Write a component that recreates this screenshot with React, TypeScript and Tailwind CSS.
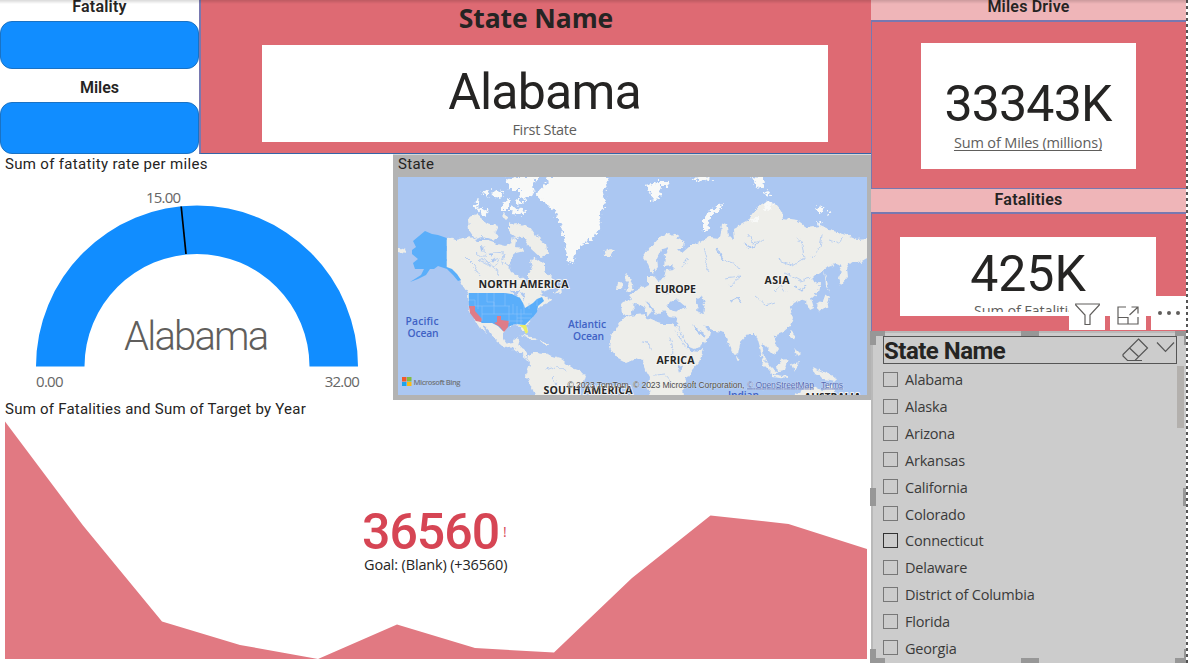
import React from "react";

const DIN = "font-['Roboto',sans-serif]";
const UI = "font-['Open_Sans',sans-serif]";

const states = [
  "Alabama", "Alaska", "Arizona", "Arkansas", "California", "Colorado",
  "Connecticut", "Delaware", "District of Columbia", "Florida", "Georgia",
];

function WorldMap() {
  return (
    <svg className="block h-[218px] w-[469px]" viewBox="398 177 469 218">
      <defs>
        <filter id="coast" x="-5%" y="-5%" width="110%" height="110%">
          <feTurbulence type="fractalNoise" baseFrequency="0.16" numOctaves="3" seed="4" result="n" />
          <feDisplacementMap in="SourceGraphic" in2="n" scale="6" xChannelSelector="R" yChannelSelector="G" />
        </filter>
        <filter id="ice" x="-5%" y="-5%" width="110%" height="110%">
          <feTurbulence type="fractalNoise" baseFrequency="0.3" numOctaves="2" seed="9" result="n" />
          <feDisplacementMap in="SourceGraphic" in2="n" scale="9" xChannelSelector="R" yChannelSelector="G" />
        </filter>
      </defs>
      <rect x="398" y="177" width="469" height="218" fill="#abc7f2" />
      <g filter="url(#coast)" fill="#eeeeea">
        {/* North and Central America */}
        <path d="M446 237L455 240 463 238 470 236 478 241 488 241 497 244 505 246 511 244 513 236 517 239 516 247 522 248 524 252 516 254 510 259 509 266 512 272 519 276 524 280 526 286 529 281 529 274 532 268 530 260 534 258 541 263 545 262 545 270 551 277 557 284 550 289 543 292 540 295 547 297 552 300 545 304 538 307 533 317 527 324 528 332 525 333 521 326 515 325 508 327 503 332 503 339 507 344 513 343 516 338 520 339 518 346 524 349 528 355 526 358 519 352 510 348 501 345 495 340 491 333 482 323 486 333 482 330 475 319 469 309 468 294 461 283 456 274 446 267Z" />
        {/* South America */}
        <path d="M527 358L533 352 538 352 543 353 553 356 560 358 565 362 571 368 580 371 586 375 584 382 579 387 577 397 536 397 531 386 526 375 530 365Z" />
        {/* Africa */}
        <path d="M622 319L630 315 645 313 648 319 655 322 662 324 670 324 677 326 681 334 686 343 690 350 699 351 704 350 699 362 692 370 686 379 683 389 684 397 651 397 648 387 649 377 645 370 643 361 635 359 626 363 618 359 612 352 609 346 611 337 616 328Z" />
        {/* Europe and Asia */}
        <path d="M643 257L650 247 660 236 670 233 677 237 685 242 684 248 677 248 682 253 690 246 702 242 710 237 720 238 722 225 727 222 729 235 734 240 733 229 748 221 758 207 768 201 776 204 782 211 783 219 797 221 807 228 820 226 830 230 847 235 857 239 869 238 869 258 860 263 851 261 847 268 848 277 841 285 838 277 843 266 837 264 827 268 817 274 812 279 820 284 818 292 811 298 814 308 810 310 806 302 800 300 794 303 790 308 793 318 790 326 783 332 775 335 774 341 778 349 774 355 767 348 762 343 764 356 768 362 763 359 758 341 755 333 749 333 740 343 738 354 734 356 729 344 725 333 713 330 702 326 710 333 708 341 695 349 690 347 684 338 677 325 678 318 669 317 664 311 656 314 651 306 644 300 652 311 649 315 642 305 635 304 631 314 622 316 621 305 624 302 631 300 628 296 636 291 643 287 648 284 648 276 654 276 658 281 665 279 667 270 675 269 671 265 663 266 664 255 669 247 662 249 657 260 658 267 652 274 647 263Z" />
        <path d="M626 274L630 277 634 289 626 291 629 284 625 280Z M618 283L623 282 622 289 617 289Z M603 252L609 248 615 251 610 256 604 256Z" />
        <path d="M817 305L823 301 826 293 830 297 827 307 819 312Z M824 270L828 284 830 293 826 284Z" />
        <path d="M759 355L766 362 773 369 779 373 772 373 763 364Z M777 366L784 358 788 361 785 370 778 371Z M772 374L788 377 788 379 772 377Z M813 367L821 371 833 376 836 381 824 379 815 374Z M790 330L796 336 795 341 790 337Z M794 347L801 354 797 357Z M792 364L799 361 795 371Z M791 397L803 390 813 386 822 391 831 384 837 397Z M736 356L740 357 738 361Z" />
        <path d="M519 334L531 337 538 341 529 339Z M540 341L549 343 545 345Z M397 247L406 250 404 254 397 252Z M553 293L560 289 561 294Z" />
        {/* Canadian archipelago */}
        <path d="M468 219L477 215 486 222 493 231 499 236 494 241 482 237 475 239 469 230Z M484 222L498 226 495 232 487 229Z M508 225L520 224 531 228 538 238 546 245 548 254 541 257 531 248 524 238 515 237 508 232Z M510 222L516 226 510 232Z M502 212L510 216 505 221Z" />
      </g>
      <g filter="url(#ice)" fill="#f8f9f8">
        <path d="M536 193L546 184 549 176 610 176 606 187 603 193 606 201 599 217 601 228 593 238 583 245 576 252 573 263 568 262 565 243 559 222 554 210 545 203 541 200Z" />
        <path d="M506 179L518 176 540 176 532 185 534 193 526 200 519 197 522 190 510 190Z M472 205L479 200 477 208 490 211 484 216Z M492 190L503 192 501 198 493 197Z M502 203L509 199 509 210 502 210Z M512 207L526 210 525 215 511 214Z M482 193L489 190 487 197Z M516 199L526 203 517 205Z" />
        <path d="M647 185L656 183 661 188 658 200 651 199Z M656 181L667 181 668 186 657 186Z M703 230L703 219 711 209 723 203 721 209 710 217 707 231Z M752 176L763 177 764 187 756 188Z M763 190L770 192 768 198Z M767 200L773 202 771 211 763 210Z M813 208L824 206 820 214Z M818 220L823 222 819 225Z M827 210L831 212 829 215Z M748 222L760 215 757 221Z M690 178L711 176 712 179 699 181Z" />
      </g>
      {/* Inland water */}
      <g filter="url(#coast)" fill="#abc7f2">
        <path d="M666 306L672 300 680 301 687 307 681 311 672 310Z M695 300L702 296 705 304 703 314 697 311 698 305Z M692 324L699 331 706 335 704 338 695 330Z M674 329L686 347 689 351 680 340Z M678 364L683 366 680 372Z M511 291L519 291 517 296Z M519 294L525 293 524 300Z M518 297L521 304 517 303Z M480 246L484 247 481 251Z M491 258L495 259 493 263Z M489 253L493 252 491 256Z" />
        <g fill="none" stroke="#abc7f2" strokeWidth="0.8">
          <path d="M704 248L707 258 705 265 710 273M719 250L722 259 735 264 740 270M749 234L753 243 765 239M778 260L793 265 804 258 802 245 797 237M822 234L820 247 812 258M829 240L840 243 842 237M785 273L800 281 811 278M725 278L740 276 730 287M659 289L668 294 674 286M773 292L781 285 786 292M755 296L766 305 775 302M480 246L488 253 480 260 495 268 499 276M494 252L505 253 503 262 510 267M474 251L487 263 500 259 494 268M640 341L650 345 653 352M670 337L673 350 667 362M655 375L665 374 672 382M546 370L557 366 567 371M551 377L557 384M465 257L474 266 480 276" />
          <path d="M717 249L724 260M744 243L751 248 758 243M682 267L688 258M730 301L738 297 742 302M795 286L802 290 806 284" strokeWidth="1.1" />
        </g>
      </g>
      {/* Highlighted states */}
      <g fill="#5aaefa">
        <path d="M412 250L416 247 413 241 419 236 425 231 432 234 438 235 446.700 238V267L452 269 457 274 461 280 458 281 453 275 447 269 438 266 434 269 430 269 426 275 418 279 410 282 421 275 424 269 415 269 413 263 418 259 412 254Z" />
        <path d="M468.700 293H505L512 294 520 298 523 303 525 308 533 303 537 299 542 297 544 301 538 306 537 312 533 317 528 322 525 325 515 324 508 327 503 331 498 326 492 323 482 323 475 318 469 307Z" />
      </g>
      <path d="M469 306H475V311L482 319 481 322 476 321 470 313Z M497 316H501V320L509 321 508 327 504 332 500 327 494 323 497 322Z" fill="#df7c88" />
      <path d="M519 325L526 325 528 332 526 334 523 328Z" fill="#e9ed66" />
      <g fill="none" stroke="#94c6f8" strokeWidth="0.5">
        <path d="M475 306V300H469M478 293V309M475 306H494M482 306V321M482 314H509M487 293V302H494V314M494 293V306H510M505 293V306M509 306V323M517 306V324M513 304V314M521 309V324M509 314H532M517 318H531M524 305V314M529 303V309M537 299V306M509 321H523" />
      </g>
      <g className="font-['Open_Sans',sans-serif] font-bold" fontSize="10.600" fill="#262626" stroke="#f4f4f2" strokeWidth="1.800" paintOrder="stroke">
        <text x="478.500" y="287.500" textLength="90">NORTH AMERICA</text>
        <text x="655" y="293" textLength="41">EUROPE</text>
        <text x="764.500" y="284" textLength="25">ASIA</text>
        <text x="656.500" y="363.500" textLength="38">AFRICA</text>
        <text x="543.500" y="393.500" textLength="89">SOUTH AMERICA</text>
        <text x="804" y="401" textLength="57">AUSTRALIA</text>
      </g>
      <g className="font-['Open_Sans',sans-serif] font-semibold" fontSize="10.300" fill="#3f62c5">
        <text x="405.500" y="325" textLength="33">Pacific</text>
        <text x="407.500" y="337" textLength="31">Ocean</text>
        <text x="568" y="327.500" textLength="38">Atlantic</text>
        <text x="573" y="339.500" textLength="31">Ocean</text>
        <text x="728" y="399" textLength="31">Indian</text>
      </g>
      <path d="M402 377h4.500v4.500h-4.500z" fill="#f1592a" />
      <path d="M407 377h4.500v4.500h-4.500z" fill="#82bc3f" />
      <path d="M402 382h4.500v4h-4.500z" fill="#1ba4ec" />
      <path d="M407 382h4.500v4h-4.500z" fill="#fcb913" />
      <text x="413.500" y="384.500" fontSize="7.600" textLength="47" className="font-['Open_Sans',sans-serif] font-semibold" fill="#72767c">Microsoft Bing</text>
      <g className="font-['Liberation_Sans',sans-serif]" fontSize="8.600" fill="#4c4c4c" stroke="#f2f2f0" strokeWidth="0.600" strokeOpacity="0.700" paintOrder="stroke">
        <text x="567.500" y="387.500" textLength="177">© 2023 TomTom, © 2023 Microsoft Corporation,</text>
        <g fill="#5269b5" textDecoration="underline">
          <text x="747" y="387.500" textLength="67">© OpenStreetMap</text>
          <text x="821" y="387.500" textLength="22">Terms</text>
        </g>
      </g>
    </svg>
  );
}

function ButtonColumn() {
  return (
    <div className={`flex w-[199px] shrink-0 flex-col text-center text-[16px] font-semibold leading-[20px] text-[#252423] ${DIN}`}>
      <div className="-mt-[3px] h-[24px] tracking-[0.2px]">Fatality</div>
      <div className="h-[48px] rounded-[12px] border border-[#1a72c4] bg-[#118dff]" />
      <div className="h-[33px] pt-[9px]">Miles</div>
      <div className="h-[52px] rounded-[12px] border border-[#1a72c4] bg-[#118dff]" />
    </div>
  );
}

function Gauge() {
  return (
    <section className="relative h-[246px] w-[393px] shrink-0">
      <h2 className={`pl-[5px] pt-px text-[15px] leading-[19px] tracking-[0.32px] text-[#252423] ${DIN}`}>Sum of fatatity rate per miles</h2>
      <svg className="absolute left-0 top-0 h-[246px] w-[393px]" viewBox="0 154 393 246">
        <path d="M36 366.500A161 161 0 0 1 358 366.500H309.500A112.500 112.500 0 0 0 84.500 366.500Z" fill="#118dff" />
        <path d="M181.200 206.500L186 254" stroke="#000" strokeWidth="1.700" />
      </svg>
      <span className={`absolute left-[146px] top-[34px] text-[15px] leading-[18px] tracking-[-0.8px] text-[#666] ${UI}`}>15.00</span>
      <span className={`absolute left-[36px] top-[218px] text-[15px] leading-[18px] tracking-[-0.7px] text-[#666] ${UI}`}>0.00</span>
      <span className={`absolute right-[34px] top-[218px] text-[15px] leading-[18px] tracking-[-0.8px] text-[#666] ${UI}`}>32.00</span>
      <span className={`absolute left-[124px] top-[160px] text-[40px] font-light leading-[46px] tracking-[-1.8px] text-[#605e5c] ${DIN}`}>Alabama</span>
    </section>
  );
}

function Trend() {
  return (
    <section className="relative h-[263px] w-[871px]">
      <h2 className={`pl-[5px] text-[15px] leading-[19px] tracking-[0.23px] text-[#252423] ${DIN}`}>Sum of Fatalities and Sum of Target by Year</h2>
      <svg className="absolute left-0 top-0 h-[263px] w-[871px]" viewBox="0 400 871 263">
        <path d="M5 421.500L83 525.500 162 621.500 240 645 318 659 397 624.500 475 648 554 652.500 632 578 710.500 515.500 788.500 524 867 549V659H5Z" fill="#e17982" />
      </svg>
      <div className="absolute left-[362px] top-[107px]">
        <div className="flex items-center">
          <span className={`text-[50px] font-medium leading-[50px] tracking-[-1px] text-[#d64554] ${DIN}`}>36560</span>
          <span className={`ml-1 text-[14px] leading-[20px] text-[#d64554] ${UI}`}>!</span>
        </div>
        <div className={`ml-[2px] -mt-[2px] whitespace-nowrap text-[14.500px] leading-[20px] tracking-[-0.160px] text-[#252423] ${UI}`}>Goal: (Blank) (+36560)</div>
      </div>
    </section>
  );
}

function Slicer() {
  return (
    <section className="relative h-[332px] w-[315px] border-l-2 border-t-2 border-[#b9b9b9] bg-[#ccc] pl-[10px] pt-[3px]">
      <div className="flex h-7 w-[294px] items-center border border-[#555]">
        <h2 className={`pt-[2px] text-[24px] font-bold leading-[26px] tracking-[-0.5px] text-[#252423] ${DIN}`}>State Name</h2>
        <svg className="ml-auto h-[26px] w-[56px]" viewBox="1120 338 56 26" fill="none" stroke="#555" strokeWidth="1.200">
          <path d="M1138.500 340L1147.500 349 1135 361.500H1127.500L1123 357V355.500ZM1129.500 349L1139 358M1135 361.500H1142" />
          <path d="M1157 343.500L1165.500 352.500 1174 343.500" />
        </svg>
      </div>
      <div className="pt-[2px]">
        {states.map((name) => (
          <label key={name} className={`flex h-[26.850px] items-center text-[14.500px] leading-[20px] tracking-[-0.2px] text-[#3a3a3a] ${UI}`}>
            <span className={`mr-[7px] size-[15px] border ${name === "Connecticut" ? "border-[#333]" : "border-[#777]"}`} />
            <span className="pt-[2px]">{name}</span>
          </label>
        ))}
      </div>
      <div className="absolute right-[2px] top-[33px] h-[62px] w-[7px] bg-[#b3b0ad]" />
      <div className="absolute -left-[3px] -top-[2px] h-[14px] w-[15px] border-l-[6px] border-t-[5px] border-[#979797]" />
      <div className="absolute left-[148px] -top-[2px] h-[5px] w-[18px] bg-[#979797]" />
      <div className="absolute -top-[2px] right-0 h-[14px] w-[11px] border-r-2 border-t-[5px] border-[#979797]" />
      <div className="absolute -left-[3px] top-[155px] h-[18px] w-[6px] bg-[#979797]" />
      <div className="absolute right-0 top-[155px] h-[18px] w-[3px] bg-[#979797]" />
      <div className="absolute -left-[3px] bottom-0 h-[14px] w-[15px] border-b-[5px] border-l-[6px] border-[#979797]" />
      <div className="absolute bottom-0 left-[148px] h-[5px] w-[18px] bg-[#979797]" />
      <div className="absolute bottom-0 right-0 h-[14px] w-[11px] border-b-[5px] border-r-2 border-[#979797]" />
    </section>
  );
}

function VisualToolbar() {
  return (
    <div className="absolute left-[197px] top-[82px] flex items-end gap-[5px]">
      <div className="flex h-[34px] w-[36px] justify-center bg-white pt-[7px]">
        <svg className="h-[23px] w-[25px]" viewBox="0 0 25 23" fill="none" stroke="#605e5c" strokeWidth="1.200">
          <path d="M0.700 1H24.300V2L15 12V21.500H10V12L0.700 2Z" />
        </svg>
      </div>
      <div className="flex h-[34px] w-[36px] justify-center bg-white pt-[10px]">
        <svg className="h-[20px] w-[22px]" viewBox="0 0 22 20" fill="none" stroke="#605e5c" strokeWidth="1.200">
          <path d="M9 1H1V18H21V11M1 11.500H11V18M12.500 9L20.500 1.500M14.500 1H21V7.500" />
        </svg>
      </div>
      <div className="flex h-[34px] w-[35px] items-center justify-center gap-[5px] bg-white">
        <i className="size-1 rounded-full bg-[#605e5c]" />
        <i className="size-1 rounded-full bg-[#605e5c]" />
        <i className="size-1 rounded-full bg-[#605e5c]" />
      </div>
    </div>
  );
}

export default function App() {
  return (
    <div className="relative flex h-[663px] w-[1188px] overflow-hidden bg-white">
      <main className="w-[871px] shrink-0">
        <div className="flex h-[154px]">
          <ButtonColumn />
          <section className="flex w-[672px] flex-col items-center border-b border-l-2 border-b-[#3466a8] border-l-[#7878b0] bg-[#de6a73]">
            <h1 className={`h-[45px] pt-[2px] text-[26.500px] font-bold leading-[32px] tracking-[-0.100px] text-[#252423] ${UI}`}>State Name</h1>
            <div className="-mr-[17px] flex h-[97px] w-[566px] flex-col items-center bg-white pt-[17px]">
              <div className={`text-[50px] leading-[60px] tracking-[-0.800px] text-[#252423] ${DIN}`}>Alabama</div>
              <div className={`-mt-px text-[14.500px] leading-[18px] tracking-[-0.3px] text-[#605e5c] ${UI}`}>First State</div>
            </div>
          </section>
        </div>
        <div className="flex h-[246px]">
          <Gauge />
          <section className="h-[246px] w-[478px] border-t border-[#d8d8d8] bg-[#b3b3b3] px-[5px]">
            <h2 className={`h-[22px] text-[15px] leading-[19px] tracking-[0.3px] text-[#252423] ${DIN}`}>State</h2>
            <WorldMap />
          </section>
        </div>
        <Trend />
      </main>
      <aside className="w-[315px] shrink-0">
        <div className={`flex h-5 items-center justify-center bg-[#efb5b8] pb-[7px] text-[16px] font-semibold leading-[20px] tracking-[0.2px] text-[#252423] ${DIN}`}>Miles Drive</div>
        <div className="flex h-[169px] justify-center border border-r-0 border-t-2 border-[#7878b0] bg-[#de6a73] pr-[2px] pt-[21px]">
          <div className="flex h-[126px] w-[215px] flex-col items-center bg-white pt-[34px]">
            <div className={`text-[50px] leading-[55px] tracking-[-0.8px] text-[#252423] ${DIN}`}>33343K</div>
            <div className={`whitespace-nowrap text-[14.500px] leading-[22px] tracking-[-0.160px] text-[#605e5c] underline underline-offset-2 ${UI}`}>Sum of Miles (millions)</div>
          </div>
        </div>
        <div className={`flex h-[23px] items-center justify-center bg-[#efb5b8] pb-[2px] text-[16px] font-semibold leading-[20px] tracking-[0.2px] text-[#252423] ${DIN}`}>Fatalities</div>
        <div className="relative flex h-[119px] justify-center border-l border-t-2 border-[#7878b0] bg-[#de6a73] pr-[2px] pt-[23px]">
          <div className="h-[79px] w-[256px] bg-white pt-[10px] text-center">
            <div className={`text-[50px] leading-[54px] text-[#252423] ${DIN}`}>425K</div>
            <div className={`ml-[74px] h-[11px] w-[95px] overflow-hidden whitespace-nowrap text-left text-[14.500px] leading-[20px] tracking-[-0.160px] text-[#605e5c] ${UI}`}>Sum of Fatalities</div>
          </div>
          <VisualToolbar />
        </div>
        <Slicer />
      </aside>
      <div className="h-full w-[2px] bg-[repeating-linear-gradient(to_bottom,#555_0px,#555_3px,#fff_3px,#fff_6px)]" />
      <div className="absolute inset-x-0 top-0 h-[4px] bg-gradient-to-b from-black/15 to-transparent" />
    </div>
  );
}
